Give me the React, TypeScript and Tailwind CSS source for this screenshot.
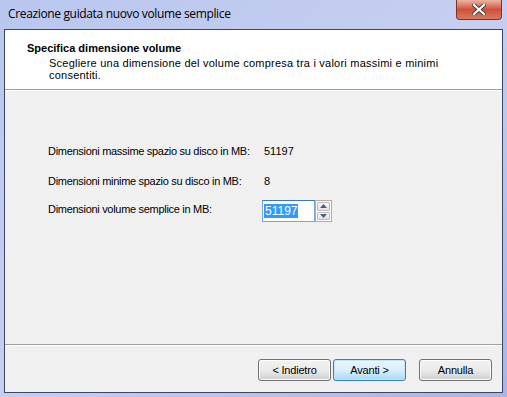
import React from "react";

const ui = { fontFamily: '"Liberation Sans", Arial, sans-serif' };
const caption = { fontFamily: '"Open Sans", "Noto Sans", sans-serif' };

interface WizButtonProps {
  label: string;
  focused?: boolean;
}

const WizButton: React.FC<WizButtonProps> = ({ label, focused }) => {
  return (
    <div
      className={`w-[73px] h-[22px] rounded-[3px] border flex items-center justify-center text-[11px] tracking-[-0.2px] text-black bg-gradient-to-b ${
        focused
          ? "border-[#3c7fb1] from-[#eaf6fd] via-[#d9f0fc] to-[#a7d9f5] shadow-[inset_0_0_0_1px_#c4e5f6]"
          : "border-[#707070] from-[#f2f2f2] via-[#ebebeb] to-[#cfcfcf] shadow-[inset_0_0_0_1px_#fcfcfc]"
      }`}
    >
      {label}
    </div>
  );
};

export default function App() {
  return (
    <div
      className="relative w-[507px] h-[397px] overflow-hidden bg-gradient-to-br from-[#b9c6ee] via-[#c6cff0] to-[#a9b6e4]"
      style={ui}
    >
      {/* title bar */}
      <div className="h-[29px] flex items-center pl-[8px] pb-[2px]">
        <span className="text-[12px] text-black tracking-[-0.35px]" style={caption}>
          Creazione guidata nuovo volume semplice
        </span>
      </div>

      {/* close button */}
      <div className="absolute top-0 right-[5px] w-[46px] h-[20px] rounded-b-[4px] border border-t-0 border-[#7a3428] bg-gradient-to-b from-[#eab3a3] via-[#d0503a] to-[#d77a5e] flex items-center justify-center">
        <svg width="14" height="11" viewBox="0 0 14 11">
          <path
            d="M2 1 L12 10 M12 1 L2 10"
            stroke="#3b3b3b"
            strokeWidth="4"
            strokeLinecap="square"
          />
          <path
            d="M2 1 L12 10 M12 1 L2 10"
            stroke="#ffffff"
            strokeWidth="2.2"
            strokeLinecap="square"
          />
        </svg>
      </div>

      {/* client area */}
      <div className="mx-[4px] w-[499px] h-[364px] border border-[#3d4563] bg-[#f0f0f0] flex flex-col">
        <div className="h-[59px] bg-white pt-[11px] pl-[22px]">
          <div className="text-[11px] font-bold text-black leading-[14px]">
            Specifica dimensione volume
          </div>
          <div className="pl-[22px] pr-[20px] text-[11px] text-black leading-[12px] mt-[2px] tracking-[0.23px]">
            Scegliere una dimensione del volume compresa tra i valori massimi e minimi
            <br />
            consentiti.
          </div>
        </div>
        <div className="h-[2px] border-t border-[#a0a0a0] bg-white" />

        <div className="flex-1 pl-[43px] pt-[53px] text-[11px] text-black">
          <div className="flex items-center h-[14px]">
            <span className="w-[216px] tracking-[-0.3px]">
              Dimensioni massime spazio su disco in MB:
            </span>
            <span>51197</span>
          </div>
          <div className="flex items-center h-[14px] mt-[16px]">
            <span className="w-[216px] tracking-[-0.3px]">
              Dimensioni minime spazio su disco in MB:
            </span>
            <span>8</span>
          </div>
          <div className="flex items-start mt-[12px]">
            <span className="w-[214px] pt-[1px] tracking-[-0.3px]">
              Dimensioni volume semplice in MB:
            </span>
            <div className="flex">
              <div className="w-[53px] h-[22px] border border-[#7aa6d6] border-t-[#3d7bad] bg-white flex items-center pl-[1px]">
                <span className="bg-[#3399ff] text-white px-[1px] leading-[14px] text-[12px]">
                  51197
                </span>
              </div>
              <div className="w-[17px] h-[22px] border border-[#b6a9a9] bg-white flex flex-col p-[1px] gap-[1px]">
                <div className="flex-1 rounded-[1px] border border-[#c2baba] bg-gradient-to-b from-[#f8f8f8] to-[#e2e2e2] flex items-center justify-center">
                  <svg width="7" height="4" viewBox="0 0 7 4">
                    <path d="M3.5 0 L7 4 L0 4 Z" fill="#4c5a8a" />
                  </svg>
                </div>
                <div className="flex-1 rounded-[1px] border border-[#c2baba] bg-gradient-to-b from-[#f8f8f8] to-[#e2e2e2] flex items-center justify-center">
                  <svg width="7" height="4" viewBox="0 0 7 4">
                    <path d="M0 0 L7 0 L3.5 4 Z" fill="#4c5a8a" />
                  </svg>
                </div>
              </div>
            </div>
          </div>
        </div>

        <div className="h-[2px] border-t border-[#a0a0a0] bg-white" />
        <div className="h-[46px] flex items-start pt-[13px] pl-[253px]">
          <WizButton label="< Indietro" />
          <div className="ml-[2px]">
            <WizButton label="Avanti >" focused />
          </div>
          <div className="ml-[13px]">
            <WizButton label="Annulla" />
          </div>
        </div>
      </div>
    </div>
  );
}
